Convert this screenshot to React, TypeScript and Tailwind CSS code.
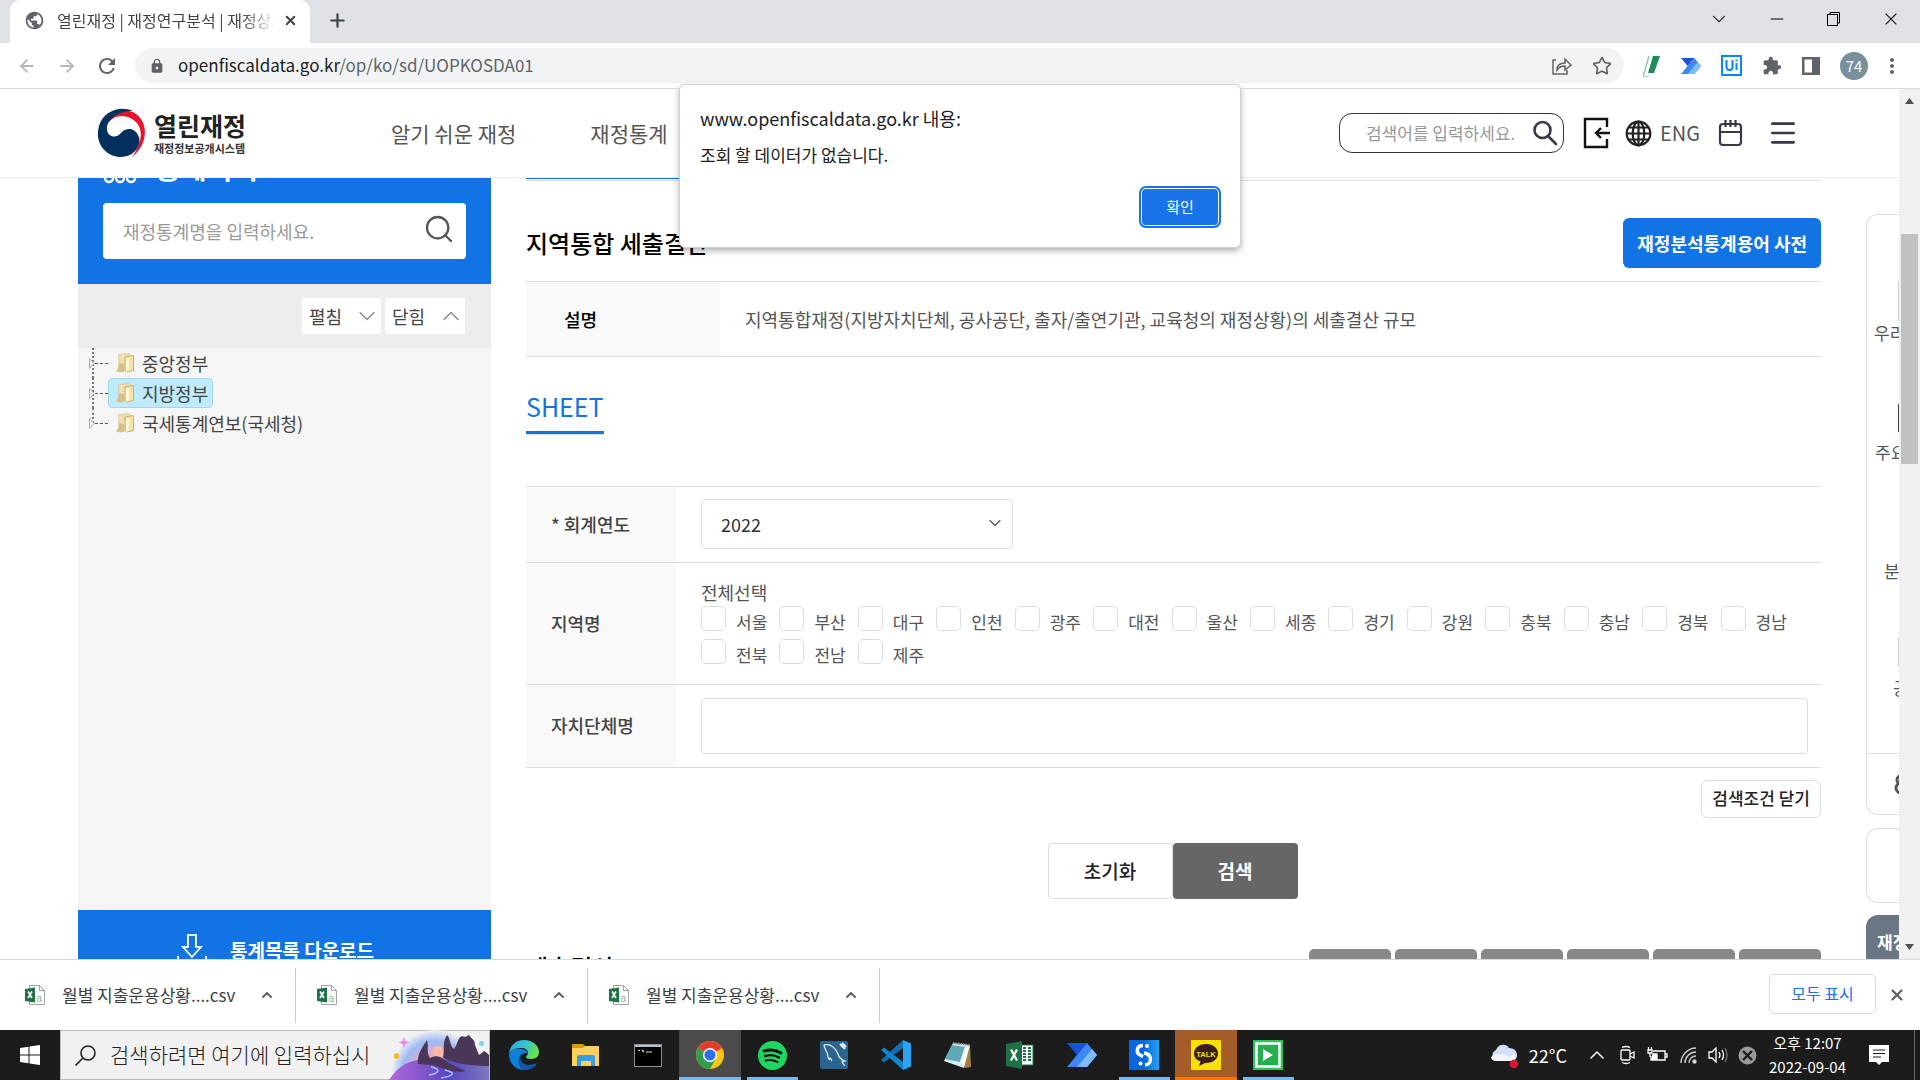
import type { ReactNode } from "react";
import {
  ArrowLeft,
  ArrowRight,
  ChevronDown,
  ChevronUp,
  Minus,
  Plus,
  Search,
  Star,
  X,
  Info,
  Menu,
} from "lucide-react";
import { MdExtension, MdLock, MdRefresh, MdMoreVert, MdPublic } from "react-icons/md";

const regions = [
  "서울", "부산", "대구", "인천", "광주", "대전", "울산", "세종", "경기",
  "강원", "충북", "충남", "경북", "경남", "전북", "전남", "제주",
];

const downloads = [1, 2, 3];

/* ---------- small drawings ---------- */

function ExcelFileIcon() {
  return (
    <svg width="20" height="20" viewBox="0 0 20 20">
      <path d="M4.5.5h10l5 5v14h-15z" fill="#fff" stroke="#a3a3a3" />
      <path d="M14.5.5v5h5" fill="none" stroke="#a3a3a3" />
      <path d="M0 4l10-1.5v15L0 16z" fill="#1e7145" />
      <path d="M3 6.5l4 6.5M7 6.5L3 13" stroke="#fff" strokeWidth="1.6" />
      <text x="11.5" y="16.5" fontSize="10" fontFamily="Liberation Sans" fill="#7fb899">a</text>
    </svg>
  );
}

function FlowIcon({ size }: { size: number }) {
  return (
    <svg width={size} height={size} viewBox="0 0 30 30">
      <path d="M0 3h20L10 15z" fill="#1554d6" />
      <path d="M20 3L0 27h20l10-12z" fill="#3b87f7" />
      <path d="M25 9l5 6-10 12H10z" fill="#7cbcff" />
    </svg>
  );
}

function TaegeukLogo() {
  return (
    <svg width="50" height="50" viewBox="0 0 50 50">
      <path d="M10 11A24 24 0 0 1 36 4C52 12 52 36 35 49c8-11 13-26 4-35C31 6 18 6 12 14z" fill="#e6132e" />
      <path d="M36 3C22-3 6 4 2 18c-5 17 7 31 22 31 14 0 22-13 17-22-4-8-13-7-17-2-5 6-13 4-14-3C9 12 20 3 36 3z" fill="#03305c" />
    </svg>
  );
}

function GlobeIcon() {
  return (
    <svg width="27" height="27" viewBox="0 0 27 27" fill="none" stroke="#222" strokeWidth="2.2">
      <circle cx="13.5" cy="13.5" r="11.8" />
      <ellipse cx="13.5" cy="13.5" rx="5.8" ry="11.8" />
      <path d="M13.5 1.5v24M1.5 13.5h24M3.5 7.5h20M3.5 19.5h20" />
    </svg>
  );
}

function LoginIcon() {
  return (
    <svg width="28" height="32" viewBox="0 0 28 32" fill="none" stroke="#111" strokeWidth="2.4">
      <path d="M24 10V2H2v28h22v-8" />
      <path d="M27 16H13M18 11l-5 5 5 5" />
    </svg>
  );
}

function CalendarIcon() {
  return (
    <svg width="25" height="28" viewBox="0 0 25 28" fill="none" stroke="#3a3846" strokeWidth="2.2">
      <rect x="2" y="5" width="21" height="21" rx="3" />
      <path d="M2 13h21M7.500 1v7M12.500 1v7M17.500 1v7" />
    </svg>
  );
}

function HeaderSearchIcon() {
  return (
    <svg width="26" height="26" viewBox="0 0 26 26" fill="none" stroke="#3a3846" strokeWidth="2.6" strokeLinecap="round">
      <circle cx="10.500" cy="10" r="8" />
      <path d="M16 16l8 8" />
    </svg>
  );
}

function FolderIcon() {
  return (
    <svg width="20" height="20" viewBox="0 0 20 20">
      <path d="M3.500 1.500L14 .5l1 1v4L8 19H4z" fill="#eedfb4" stroke="#d3c08a" strokeWidth=".6" />
      <path d="M4 10c0 4-1 6-3.500 8.500L9 19v-8z" fill="#d6c086" />
      <path d="M10 4l8.500-1.500v15L12 19l-2-1z" fill="#f5e3a8" stroke="#c9a94f" strokeWidth=".9" />
      <path d="M11 5.500l3-.5v13l-3 .5z" fill="#fdf6da" />
    </svg>
  );
}

function SearchArt() {
  return (
    <svg width="100" height="50" viewBox="0 0 100 50" className="shrink-0">
      <defs>
        <radialGradient id="sun" cx=".5" cy=".5" r=".5">
          <stop offset="0" stopColor="#f9a2a0" />
          <stop offset=".4" stopColor="#f0a8bd" />
          <stop offset=".75" stopColor="#9db9f5" />
          <stop offset="1" stopColor="#f1f1f1" />
        </radialGradient>
        <linearGradient id="river" x1="0" x2="1">
          <stop offset="0" stopColor="#b269d8" />
          <stop offset=".6" stopColor="#5a46c0" />
          <stop offset="1" stopColor="#7a78bd" />
        </linearGradient>
      </defs>
      <circle cx="46" cy="44" r="44" fill="url(#sun)" />
      <circle cx="49" cy="22" r="6" fill="#fdb9a5" />
      <path d="M0 50C10 34 24 28 40 30l60-2v22z" fill="url(#river)" />
      <path d="M29 34c-1-10 4-16 9-24 2 6-1 12 3 18 8-4 13 0 18 5l18 8c-14 3-24-4-34-6z" fill="#4a3658" />
      <path d="M54 28c2-9-1-16 4-23 4 4 2 10 7 14 4-5 3-11 8-13 5 2 4 0 7-1 3 5 6 4 6 10l4 10c6-4 4-6 10 0v11c-16 0-34-2-46-8z" fill="#4a3658" />
      <path d="M42 37c10 2 9 6-2 8M56 40c12 3 8 6-4 8" stroke="#a8c4ff" fill="none" strokeWidth="1.500" />
      <path d="M15 7l1.500 4 4 1.500-4 1.500-1.500 4-1.500-4-4-1.500 4-1.500z" fill="#e58af0" />
      <circle cx="7.500" cy="26" r="2.700" fill="#fbb416" />
      <circle cx="92.500" cy="13.500" r="2.500" fill="#78d7ea" />
    </svg>
  );
}

/* ---------- taskbar application icons ---------- */

function EdgeIcon() {
  return (
    <svg width="30" height="30" viewBox="0 0 30 30">
      <defs>
        <linearGradient id="edgeTop" x1="0" x2="1" y1="0" y2=".4">
          <stop offset="0" stopColor="#2aa4e6" />
          <stop offset=".6" stopColor="#35c6c9" />
          <stop offset="1" stopColor="#66e24e" />
        </linearGradient>
      </defs>
      <path d="M0 14C1 5 7 0 15 0c9 0 15 6 15 12 0 5-4 7-8 7-3 0-5-1-5-2 0-1 2-2 2-4C19 9 15 8 12 8 6 8 1 11 0 14z" fill="url(#edgeTop)" />
      <path d="M0 14c2-4 7-6 11-5 4 0 8 2 8 5-1-2-6-1-8 2-3 5 0 12 7 13C8 32 0 24 0 14z" fill="#0d7fd8" />
      <path d="M12 15c-2 4 1 9 7 10 3 0 6-1 9-2-2 5-7 7-12 7-6-1-9-9-4-15z" fill="#1557a5" />
    </svg>
  );
}

function ExplorerIcon() {
  return (
    <svg width="28" height="24" viewBox="0 0 28 24">
      <path d="M0 1h11l3 3v5H0z" fill="#dc9a04" />
      <path d="M0 5h11l2-2h14v20H0z" fill="#fcd15c" />
      <path d="M5 23V14q0-2 2-2h14q2 0 2 2v9h-4v-5H9v5z" fill="#3e9be0" />
    </svg>
  );
}

function TerminalIcon() {
  return (
    <svg width="28" height="23" viewBox="0 0 28 23">
      <rect x=".5" y=".5" width="27" height="22" fill="#000" stroke="#8b919b" />
      <path d="M1 1h26v2H1z" fill="#b9bec6" />
      <path d="M4 6.500h2M8 6l2 2M12 8h6" stroke="#ddd" strokeWidth="1.200" />
    </svg>
  );
}

function ChromeIcon() {
  return (
    <svg width="28" height="28" viewBox="0 0 28 28">
      <circle cx="14" cy="14" r="14" fill="#fbc417" />
      <path d="M14 14L1.900 7A14 14 0 0 1 26.100 7z" fill="#e33b2e" />
      <path d="M14 14L1.900 7A14 14 0 0 0 14 28l6-10.500z" fill="#2f9e4f" />
      <circle cx="14" cy="14" r="7" fill="#fff" />
      <circle cx="14" cy="14" r="5.600" fill="#2f6fe8" />
    </svg>
  );
}

function SpotifyIcon() {
  return (
    <svg width="29" height="29" viewBox="0 0 29 29" fill="none" stroke="#111" strokeLinecap="round">
      <circle cx="14.500" cy="14.500" r="14.500" fill="#1ed760" stroke="none" />
      <path d="M6 10c6-2 12-1 17 2" strokeWidth="3" />
      <path d="M7 15c5-1.500 10-1 14 1.500" strokeWidth="2.400" />
      <path d="M7.500 19.500c4-1 8-.5 12 1.500" strokeWidth="2" />
    </svg>
  );
}

function DolphinIcon() {
  return (
    <svg width="28" height="28" viewBox="0 0 28 28" fill="none" stroke="#e4f0f7">
      <rect width="28" height="28" rx="2" fill="#2c6490" stroke="none" />
      <path d="M4 4c7-2 12 4 14 9 1 4 4 6 7 7l-3 1 3 4M4 4c0 4 4 7 4 12 1 2 1 4 2 1 2 1 1 2 2 3" strokeWidth="1.200" />
      <path d="M20 3l5 5M22 2l4 4" strokeWidth="2" />
    </svg>
  );
}

function CodeIcon() {
  return (
    <svg width="30" height="30" viewBox="0 0 30 30">
      <path d="M0 20l3 2.500L22 8V0z" fill="#0f6fb3" />
      <path d="M0 10l3-2.500L22 22v8z" fill="#1285ce" />
      <path d="M22 0l8 3.500v23L22 30z" fill="#2aa5f3" />
    </svg>
  );
}

function NotepadIcon() {
  return (
    <svg width="28" height="28" viewBox="0 0 28 28">
      <path d="M10 3l16 1 1 22-6 1z" fill="#a87d3d" />
      <path d="M9 2l17 2-6 23L0 20z" fill="#d6eef0" />
      <path d="M8 4l13 2-5 15L1 18z" fill="#5ea9b5" />
      <path d="M21 6l4 0-5 19-4-4z" fill="#f4fafa" />
      <path d="M9 2l17 2" stroke="#888" strokeWidth="2" strokeDasharray="1.500 1" />
    </svg>
  );
}

function ExcelIcon() {
  return (
    <svg width="28" height="28" viewBox="0 0 28 28">
      <rect x="14" y="4" width="13" height="20" fill="#fff" stroke="#1e7145" />
      <path d="M17 7h3M17 10h3M17 13h3M17 16h3M17 19h3M22 7h3M22 10h3M22 13h3M22 16h3M22 19h3" stroke="#1e7145" strokeWidth="2" />
      <path d="M0 3l16-3v28L0 25z" fill="#1e7145" />
      <path d="M5 8.500l6 11M11 8.500l-6 11" stroke="#fff" strokeWidth="2.200" />
    </svg>
  );
}

function SquareSIcon() {
  return (
    <svg width="30" height="30" viewBox="0 0 30 30" fill="none" stroke="#fff" strokeWidth="3.400">
      <defs>
        <linearGradient id="sq" x1="0" x2="1">
          <stop offset=".5" stopColor="#0a66e0" />
          <stop offset="1" stopColor="#22a3f0" />
        </linearGradient>
      </defs>
      <rect width="30" height="30" fill="url(#sq)" stroke="none" />
      <path d="M14 5.500c-7 0-7 7.500-3 9.500l3 1.500" />
      <path d="M15 13c8 1 9 11 1 12" />
      <circle cx="18" cy="6" r="2" fill="#fff" stroke="none" />
      <circle cx="11.500" cy="23.500" r="2" fill="#fff" stroke="none" />
    </svg>
  );
}

function TalkIcon() {
  return (
    <svg width="30" height="30" viewBox="0 0 30 30">
      <rect width="30" height="30" rx="1" fill="#f9e000" />
      <path d="M15 4c7 0 12 4 12 9.500S22 23 15 23h-1l-6 3 1.500-4.500C5 20 3 17 3 13.500 3 8 8 4 15 4z" fill="#3b1e1e" />
      <text x="15" y="16.500" fontSize="7.500" fontWeight="700" textAnchor="middle" fontFamily="Liberation Sans" fill="#f9e000">TALK</text>
    </svg>
  );
}

function PlayerIcon() {
  return (
    <svg width="30" height="30" viewBox="0 0 30 30">
      <rect width="30" height="30" fill="#2bc45a" />
      <rect x="3.500" y="3.500" width="23" height="23" fill="#25b04f" stroke="#fff" strokeWidth="2.500" />
      <path d="M10 9l10 6-10 6z" fill="#fff" />
    </svg>
  );
}

const apps: { name: string; icon: ReactNode; box: string; line: string }[] = [
  { name: "Edge", icon: <EdgeIcon />, box: "", line: "" },
  { name: "Explorer", icon: <ExplorerIcon />, box: "", line: "" },
  { name: "Terminal", icon: <TerminalIcon />, box: "", line: "" },
  { name: "Chrome", icon: <ChromeIcon />, box: "bg-[#4b4b4b]", line: "w-full bg-[#76b9ed]" },
  { name: "Spotify", icon: <SpotifyIcon />, box: "", line: "w-[51px] bg-[#76b9ed]" },
  { name: "Workbench", icon: <DolphinIcon />, box: "", line: "" },
  { name: "Code", icon: <CodeIcon />, box: "", line: "" },
  { name: "Notepad", icon: <NotepadIcon />, box: "", line: "" },
  { name: "Excel", icon: <ExcelIcon />, box: "", line: "" },
  { name: "Flow", icon: <FlowIcon size={30} />, box: "", line: "" },
  { name: "S", icon: <SquareSIcon />, box: "", line: "w-[51px] bg-[#76b9ed]" },
  { name: "Talk", icon: <TalkIcon />, box: "bg-[#a55d27]", line: "w-full bg-[#ff7300]" },
  { name: "Player", icon: <PlayerIcon />, box: "", line: "w-[51px] bg-[#76b9ed]" },
];

/* ---------- browser chrome ---------- */

function TabStrip() {
  return (
    <div className="flex h-[43px] shrink-0 items-stretch bg-[#dee1e6] pl-[10px]">
      <div className="flex w-[300px] items-center rounded-t-[10px] bg-white pb-[2px] pl-[14px] pr-3">
        <MdPublic className="size-[21px] shrink-0 text-[#5f6368]" />
        <span className="ml-3 w-[218px] overflow-hidden whitespace-nowrap bg-gradient-to-r from-[#3c4043] from-85% to-white bg-clip-text pb-[2px] text-base leading-6 text-transparent">
          열린재정 | 재정연구분석 | 재정상세
        </span>
        <button aria-label="탭 닫기" className="ml-2 shrink-0">
          <X className="size-[15px] text-[#3c4043]" strokeWidth={3} />
        </button>
      </div>
      <button aria-label="새 탭" className="ml-[17px] pb-[2px]">
        <Plus className="size-[21px] text-[#3c4043]" strokeWidth={2.5} />
      </button>
      <div className="ml-auto flex items-center gap-[37px] pb-[6px] pr-[19px]">
        <button aria-label="탭 검색"><ChevronDown className="size-[22px] text-[#333]" strokeWidth={1.2} /></button>
        <button aria-label="최소화"><Minus className="size-[20px] text-black" strokeWidth={1.3} /></button>
        <button aria-label="이전 크기로">
          <svg width="20" height="14" viewBox="0 0 20 14" fill="none" stroke="#000">
            <rect x="3.500" y="2.500" width="10" height="11" />
            <path d="M6 2V.5h9.500V11H14" />
          </svg>
        </button>
        <button aria-label="닫기"><X className="size-[20px] text-[#222]" strokeWidth={1.300} /></button>
      </div>
    </div>
  );
}

function Toolbar() {
  return (
    <div className="flex h-[46px] shrink-0 items-center border-b border-[#d8d9dc] bg-white pl-[17px] pr-4">
      <button aria-label="뒤로"><ArrowLeft className="size-5 text-[#b5b7ba]" strokeWidth={2.200} /></button>
      <button aria-label="앞으로" className="ml-5"><ArrowRight className="size-5 text-[#b5b7ba]" strokeWidth={2.200} /></button>
      <button aria-label="새로고침" className="ml-[18px]"><MdRefresh className="size-6 text-[#5f6368]" /></button>
      <div className="ml-4 flex h-[35px] flex-1 items-center rounded-full bg-[#f1f3f4] pl-[14px] pr-3">
        <MdLock className="size-4 text-[#5f6368]" />
        <p className="ml-[13px] flex-1 pb-[2px] text-[17px] leading-6 text-[#5f6368]">
          <span className="text-[#202124]">openfiscaldata.go.kr</span>/op/ko/sd/UOPKOSDA01
        </p>
        <button aria-label="공유">
          <svg width="20" height="18" viewBox="0 0 20 18" fill="none" stroke="#5f6368" strokeWidth="1.500">
            <path d="M4 3H1v14h14v-4" />
            <path d="M5 13c0-5 3-7 8-7V2l6 6-6 5V9c-4 0-6 1-8 4z" />
          </svg>
        </button>
        <button aria-label="북마크" className="ml-5"><Star className="size-5 text-[#5f6368]" /></button>
      </div>
      <div className="ml-[19px] flex items-center gap-5">
        <svg width="18" height="22" viewBox="0 0 18 22">
          <path d="M6 1L0 22h6" fill="none" stroke="#8ec9ab" strokeWidth="1.500" />
          <path d="M10 1h7l-6 17H5z" fill="#1f8a5b" />
        </svg>
        <FlowIcon size={20} />
        <svg width="21" height="21" viewBox="0 0 21 21" fill="none" stroke="#0a84ff" strokeWidth="2">
          <rect x="1" y="1" width="19" height="19" fill="#fff" />
          <path d="M5.500 5v7q0 3 3 3t3-3V5M15.500 8v7M15.500 4.500v2" />
        </svg>
        <MdExtension className="size-5 text-[#5f6368]" />
        <svg width="18" height="18" viewBox="0 0 18 18">
          <rect x="1.250" y="1.250" width="15.500" height="15.500" fill="#fff" stroke="#5f6368" strokeWidth="2.500" />
          <rect x="10" y="1" width="7" height="16" fill="#5f6368" />
        </svg>
        <span className="flex size-7 items-center justify-center rounded-full bg-[#78909c] text-[15px] leading-5 text-white">74</span>
      </div>
      <button aria-label="메뉴" className="ml-3"><MdMoreVert className="size-6 text-[#5f6368]" /></button>
    </div>
  );
}

function AlertDialog() {
  return (
    <div
      role="alertdialog"
      aria-labelledby="alert-title"
      className="absolute left-1/2 top-[84px] z-20 flex w-[562px] -translate-x-1/2 flex-col rounded-md border border-[#cfd2d1] bg-white px-5 pb-5 pt-5 shadow-[0_3px_6px_rgba(0,0,0,0.3)]"
    >
      <h2 id="alert-title" className="text-[18px] leading-[26px] text-[#202124]">www.openfiscaldata.go.kr 내용:</h2>
      <p className="mt-3 text-[17px] leading-6 text-[#202124]">조회 할 데이터가 없습니다.</p>
      <button className="mt-5 h-[40px] w-[80px] self-end rounded-md border border-white bg-[#1a73e8] text-[15px] leading-5 text-white outline-2 -outline-offset-1 outline-[#1a73e8] ring-1 ring-inset ring-white">
        확인
      </button>
    </div>
  );
}

/* ---------- web page ---------- */

function SiteHeader() {
  return (
    <header className="z-10 flex h-[89px] shrink-0 items-center border-b border-[#eee] bg-white pl-[97px] pr-[100px]">
      <a href="#home" className="flex w-[155px] items-center gap-[7px]">
        <TaegeukLogo />
        <span className="flex flex-col font-bold text-[#222]">
          <span className="text-[25px] leading-[30px]">열린재정</span>
          <span className="whitespace-nowrap text-[11px] leading-4 text-[#333]">재정정보공개시스템</span>
        </span>
      </a>
      <nav className="ml-[139px] flex gap-[74px] text-[21px] leading-8 text-[#555]">
        <a href="#easy">알기 쉬운 재정</a>
        <a href="#stats">재정통계</a>
      </nav>
      <div className="ml-auto flex items-center">
        <div className="flex h-10 w-[225px] items-center rounded-[13px] border border-[#333] pl-[26px] pr-[5px]">
          <input aria-label="검색어" placeholder="검색어를 입력하세요." className="w-full min-w-0 flex-1 text-[17px] leading-6 outline-none placeholder:text-[#999]" />
          <button aria-label="검색"><HeaderSearchIcon /></button>
        </div>
        <a href="#login" aria-label="로그인" className="ml-[19px]"><LoginIcon /></a>
        <a href="#eng" className="ml-[14px] flex items-center gap-2 text-[20px] leading-7 text-[#555]">
          <GlobeIcon />
          ENG
        </a>
        <a href="#calendar" aria-label="일정" className="ml-[18px]"><CalendarIcon /></a>
        <button aria-label="전체 메뉴" className="ml-6"><Menu className="size-8 text-[#3a3846]" strokeWidth={2} /></button>
      </div>
    </header>
  );
}

function TreeRow({ label, active, last }: { label: string; active?: boolean; last?: boolean }) {
  return (
    <li className="flex h-[30px] items-center">
      <span className="relative flex h-full w-4 items-center">
        <span className={`absolute left-0 top-0 border-l-2 border-dotted border-[#777] ${last ? "h-1/2" : "h-full"}`} />
        <svg width="6" height="11" viewBox="0 0 6 11" className="absolute -left-[3px]">
          <path d="M.5.500l4.500 5-4.500 5z" fill="#f5f5f5" stroke="#aaa" />
        </svg>
        <span className="ml-[3px] w-[13px] border-t border-dashed border-[#555]" />
      </span>
      <a
        href={`#${label}`}
        className={`flex h-[30px] items-center gap-[7px] rounded-sm border pl-[6px] pr-1 ${active ? "border-[#a5d5ec] bg-[#beebff]" : "border-transparent"}`}
      >
        <FolderIcon />
        <span className="text-[18px] leading-6 text-[#444]">{label}</span>
      </a>
    </li>
  );
}

function Sidebar() {
  return (
    <aside className="flex w-[413px] shrink-0 flex-col bg-[#f5f5f5]">
      <div className="-mt-[30px] bg-[#1274e4] px-[25px] pb-[25px]">
        <div className="flex h-[55px] items-start justify-between text-white">
          <div className="flex items-center gap-[18px]">
            <svg width="34" height="38" viewBox="0 0 34 38" fill="none" stroke="#fff" strokeWidth="2.500">
              <circle cx="6" cy="30" r="4" />
              <circle cx="17" cy="30" r="4" />
              <circle cx="28" cy="30" r="4" />
            </svg>
            <h2 className="text-[28px] font-bold leading-9">통계처리</h2>
          </div>
          <a href="#notice" className="flex items-center gap-2 pt-1 text-[18px] leading-[32px]">
            알림 <Info className="size-5" strokeWidth={1.500} />
          </a>
        </div>
        <div className="flex h-14 items-center rounded bg-white pl-5 pr-[11px]">
          <input aria-label="재정통계명" placeholder="재정통계명을 입력하세요." className="min-w-0 flex-1 text-[18px] leading-6 outline-none placeholder:text-[#999]" />
          <button aria-label="찾기" className="pb-1"><Search className="size-8 text-[#555]" strokeWidth={1.700} /></button>
        </div>
      </div>
      <div className="flex h-16 items-center justify-end gap-1 bg-[#ededed] pr-[26px] text-[18px] leading-6 text-[#444]">
        <button className="flex h-9 w-[79px] items-center justify-between bg-white pl-[7px]">
          펼침 <ChevronDown className="size-7 text-[#888]" strokeWidth={1.200} />
        </button>
        <button className="flex h-9 w-20 items-center justify-between bg-white pl-[7px]">
          닫힘 <ChevronUp className="size-7 text-[#888]" strokeWidth={1.200} />
        </button>
      </div>
      <ul className="flex-1 pl-[14px]">
        <TreeRow label="중앙정부" />
        <TreeRow label="지방정부" active />
        <TreeRow label="국세통계연보(국세청)" last />
      </ul>
      <button className="flex h-[49px] items-start justify-center gap-[23px] overflow-hidden bg-[#1274e4] pr-[18px] pt-6 text-[19px] font-bold leading-8 text-white">
        <svg width="30" height="30" viewBox="0 0 30 30" fill="none" stroke="#fff" strokeWidth="1.800" className="shrink-0">
          <path d="M11 1h8v12h5l-9 10-9-10h5z" />
          <path d="M1 22v7h28v-7" />
        </svg>
        통계목록 다운로드
      </button>
    </aside>
  );
}

function RegionPicker() {
  return (
    <div role="group" aria-label="지역명">
      <button className="block text-[18px] leading-6 text-[#555]">전체선택</button>
      <div className="mt-[2px] grid grid-cols-[repeat(14,1fr)] gap-y-[5px] pr-[22px]">
        {regions.map((name) => (
          <label key={name} className="flex h-7 items-start gap-[10px] whitespace-nowrap text-[17px] leading-6 text-[#555]">
            <input type="checkbox" className="size-[25px] shrink-0 appearance-none rounded-[5px] border border-[#ddd] bg-white" />
            <span className="pt-1">{name}</span>
          </label>
        ))}
      </div>
    </div>
  );
}

function Main() {
  const head = "w-[150px] bg-[#f9f9f9] pb-[2px] pl-[25px] text-left text-[18px] font-medium leading-6 text-[#444]";
  return (
    <main className="ml-[35px] flex min-w-0 flex-1 flex-col">
      <div className="h-[3px] border-b border-[#ddd]">
        <div className="h-px w-[300px] bg-[#1274e4]" />
      </div>
      <div className="mt-[37px] flex items-center justify-between">
        <h1 className="text-[24px] font-medium leading-9 text-black">지역통합 세출결산</h1>
        <button className="h-[50px] rounded-md bg-[#1274e4] px-[14px] text-[18px] font-bold leading-6 text-white">
          재정분석통계용어 사전
        </button>
      </div>
      <table className="mt-[13px] w-full border-y border-[#ddd]">
        <tbody>
          <tr className="h-[75px]">
            <th className="w-[194px] bg-[#f9f9f9] pl-[38px] text-left text-[18px] font-medium leading-6 text-black">설명</th>
            <td className="pl-[25px] text-[18px] leading-6 text-[#555]">
              지역통합재정(지방자치단체, 공사공단, 출자/출연기관, 교육청의 재정상황)의 세출결산 규모
            </td>
          </tr>
        </tbody>
      </table>
      <div className="mt-[30px] flex">
        <button className="border-b-[3px] border-[#1274e4] pb-[6px] text-[25px] leading-[38px] text-[#1274e4] shadow-[0_2px_0_-1px_#ddd]">
          SHEET
        </button>
      </div>
      <table className="mt-[52px] w-full border-collapse border-t border-[#ddd]">
        <tbody>
          <tr className="h-[76px] border-b border-[#ddd]">
            <th className={head}><label htmlFor="year">* 회계연도</label></th>
            <td className="pb-[2px] pl-[25px]">
              <div className="relative w-[312px]">
                <select id="year" className="h-[50px] w-full appearance-none rounded-[5px] border border-[#ddd] bg-white pl-[19px] text-[18px] leading-6 text-[#333]">
                  <option>2022</option>
                </select>
                <ChevronDown className="pointer-events-none absolute right-2 top-[14px] size-5 text-[#555]" strokeWidth={1.400} />
              </div>
            </td>
          </tr>
          <tr className="h-[122px] border-b border-[#ddd]">
            <th className={head}>지역명</th>
            <td className="pl-[25px]"><RegionPicker /></td>
          </tr>
          <tr className="h-[83px] border-b border-[#ddd]">
            <th className={head}><label htmlFor="local">자치단체명</label></th>
            <td className="pl-[25px] pr-[13px]">
              <input id="local" className="block h-14 w-full rounded border border-[#ddd] px-4 text-[18px]" />
            </td>
          </tr>
        </tbody>
      </table>
      <button className="mt-3 h-[38px] self-end rounded-md border border-[#ddd] px-[10px] pb-[2px] text-[17px] font-medium leading-6 text-[#222]">
        검색조건 닫기
      </button>
      <div className="mt-[25px] flex justify-center pr-[2px]">
        <button className="h-14 w-[125px] rounded border border-[#ddd] text-[19px] font-medium leading-6 text-[#222]">초기화</button>
        <button className="h-14 w-[125px] rounded bg-[#666] text-[19px] font-bold leading-6 text-white">검색</button>
      </div>
      <div className="mt-[50px] flex items-start">
        <h2 className="h-[10px] overflow-hidden pt-1 text-[24px] font-medium leading-[28px] text-black">세출결산</h2>
        <div className="ml-auto flex gap-1">
          {["엑셀", "CSV", "JSON", "XML", "인쇄", "공유"].map((name) => (
            <button key={name} aria-label={name} className="h-[10px] w-[82px] rounded-t-[5px] bg-[#888]" />
          ))}
        </div>
      </div>
    </main>
  );
}

function QuickMenu() {
  return (
    <aside className="ml-[45px] mt-9 flex w-[33px] shrink-0 flex-col overflow-hidden whitespace-nowrap text-[17px] leading-6 text-[#555]">
      <div className="h-[601px] shrink-0 rounded-l-xl border-y border-l border-[#ddd]">
        <ul className="flex h-[539px] flex-col border-b border-[#ddd] pt-[66px]">
          <li className="flex h-[119px] flex-col pl-[7px]">
            <span className="ml-[24px] h-10 border-l border-[#ccc]" />
            <a href="#a">우리</a>
          </li>
          <li className="flex h-[119px] flex-col pl-2">
            <span className="mb-2 ml-[23px] mt-1 h-7 border-l-2 border-[#444]" />
            <a href="#b">주요</a>
          </li>
          <li className="flex h-[119px] flex-col pl-[17px] pt-10">
            <a href="#c">분석</a>
          </li>
          <li className="flex h-[100px] flex-col pl-[26px]">
            <span className="mb-[10px] ml-[5px] h-7 border-l border-[#ccc]" />
            <a href="#d">공개</a>
          </li>
        </ul>
        <svg width="32" height="60" viewBox="0 0 32 60" fill="none" stroke="#555" strokeWidth="3" className="block">
          <circle cx="34" cy="26" r="4" />
          <circle cx="34" cy="34" r="5" />
        </svg>
      </div>
      <div className="mt-[13px] h-[75px] shrink-0 rounded-l-xl border-y border-l border-[#ddd]" />
      <div className="mt-3 h-11 shrink-0 rounded-tl-xl bg-[#6b7684] pl-[11px] pt-[15px] text-[17px] font-bold text-white">재정</div>
    </aside>
  );
}

function PageScrollbar() {
  return (
    <div className="flex w-[21px] shrink-0 flex-col items-center justify-between bg-[#f1f1f1] pb-[9px] pt-[9px]">
      <svg width="9" height="6" viewBox="0 0 9 6"><path d="M0 6L4.500 0 9 6z" fill="#505050" /></svg>
      <div className="mb-auto mt-[130px] h-[230px] w-[17px] bg-[#c1c1c1]" />
      <svg width="9" height="6" viewBox="0 0 9 6"><path d="M0 0h9L4.500 6z" fill="#505050" /></svg>
    </div>
  );
}

/* ---------- bottom bars ---------- */

function DownloadBar() {
  return (
    <div className="flex h-[71px] shrink-0 items-center border-t border-[#d8d9dc] bg-white pl-1 pr-[14px]">
      {downloads.map((id) => (
        <div key={id} className="flex h-[55px] w-[292px] items-center border-r border-[#ccc] pl-[21px] pr-[20px]">
          <ExcelFileIcon />
          <span className="ml-[17px] whitespace-nowrap text-[17px] leading-6 text-[#3c4043]">월별 지출운용상황....csv</span>
          <button aria-label="다운로드 메뉴" className="ml-auto"><ChevronUp className="size-[16px] text-[#5f6368]" strokeWidth={3} /></button>
        </div>
      ))}
      <button className="mb-[2px] ml-auto h-10 w-[107px] rounded-[5px] border border-[#dadce0] pb-[3px] text-[16px] leading-5 text-[#1a73e8]">모두 표시</button>
      <button aria-label="닫기" className="ml-3"><X className="size-[18px] text-[#5f6368]" strokeWidth={3} /></button>
    </div>
  );
}

function Taskbar() {
  return (
    <div className="flex h-[50px] shrink-0 items-stretch bg-[#1c1c1c] text-white">
      <button aria-label="시작" className="flex w-[60px] items-center justify-center">
        <svg width="20" height="20" viewBox="0 0 20 20" fill="#fff">
          <path d="M0 3l8.500-1.200v7.700H0zM9.500 1.600L20 0v9.500H9.500zM0 10.500h8.500v7.700L0 17zM9.500 10.500H20V20L9.500 18.400z" />
        </svg>
      </button>
      <div className="flex w-[430px] items-center border border-[#bbb] bg-[#f1f1f1] pl-[14px]">
        <svg width="21" height="21" viewBox="0 0 21 21" fill="none" stroke="#222" strokeWidth="1.600" className="shrink-0">
          <circle cx="13" cy="8" r="7" />
          <path d="M8 13l-7.500 7.500" />
        </svg>
        <input aria-label="Windows 검색" placeholder="검색하려면 여기에 입력하십시" className="ml-[14px] min-w-0 flex-1 pb-[3px] text-[21px] font-light leading-7 outline-none placeholder:text-[#222]" />
        <SearchArt />
      </div>
      <div className="ml-[3px] flex">
        {apps.map((app) => (
          <button key={app.name} aria-label={app.name} className={`relative flex w-[62px] items-center justify-center ${app.box}`}>
            {app.icon}
            <span className={`absolute bottom-0 h-[3px] ${app.line}`} />
          </button>
        ))}
      </div>
      <div className="ml-auto flex items-center">
        <svg width="30" height="28" viewBox="0 0 30 28">
          <path d="M7 20a6 6 0 0 1 0-11C9 3 17 2 20 7c5 0 8 3 8 7s-3 6-6 6z" fill="#cfe0f8" />
          <path d="M2 16c4-4 14-4 18 0l6-3c2 4 0 7-4 7H7c-3 0-5-2-5-4z" fill="#f3f7fd" />
          <circle cx="25" cy="23" r="4.300" fill="#e0142f" />
        </svg>
        <span className="ml-[10px] text-[18px] leading-6">22°C</span>
        <button aria-label="숨겨진 아이콘" className="ml-[18px]"><ChevronUp className="size-6" strokeWidth={1.500} /></button>
        <svg width="16" height="20" viewBox="0 0 16 20" fill="none" stroke="#fff" strokeWidth="1.300" className="ml-[11px]">
          <rect x="1" y="5" width="9" height="10" rx="1" />
          <path d="M10 9l4-2v6l-4-2M2 2.500q4-2 8 0M2 17.500q4 2 8 0" />
        </svg>
        <svg width="21" height="16" viewBox="0 0 21 16" fill="none" stroke="#fff" strokeWidth="1.300" className="ml-[11px]">
          <path d="M6 4h12v9H4v-4M18 7h2v3h-2M1 3h4v3H1zM1.500 3V0M4.500 3V0M3 6v4" />
          <path d="M6 7h4v5H5z" fill="#fff" />
        </svg>
        <svg width="17" height="17" viewBox="0 0 17 17" fill="none" stroke="#ccc" strokeWidth="1.400" className="ml-3">
          <path d="M1 16C1 8 8 1 16 1M5 16c0-6 5-11 11-11M9 16c0-4 3-7 7-7" />
          <circle cx="14.500" cy="14.500" r="1.500" fill="#fff" />
        </svg>
        <svg width="21" height="18" viewBox="0 0 21 18" fill="none" stroke="#fff" strokeWidth="1.300" className="ml-[11px]">
          <path d="M1 6h3l4-4v14l-4-4H1zM11 6q2 3 0 6M14 4q3 5 0 10" />
          <path d="M17 2q4 7 0 14" stroke="#777" />
        </svg>
        <svg width="19" height="19" viewBox="0 0 19 19" className="ml-[9px]">
          <circle cx="9.500" cy="9.500" r="9" fill="#999" />
          <path d="M5 5l9 9M14 5l-9 9" stroke="#1c1c1c" strokeWidth="2.400" />
        </svg>
        <div className="ml-3 text-center text-[15px] leading-6">
          <p>오후 12:07</p>
          <p>2022-09-04</p>
        </div>
        <button aria-label="알림" className="ml-[23px]">
          <svg width="20" height="20" viewBox="0 0 20 20">
            <path d="M0 0h20v17h-7l-3 3-3-3H0z" fill="#fff" />
            <path d="M4 5h12M4 8.500h12M4 12h8" stroke="#1c1c1c" strokeWidth="1.200" />
          </svg>
        </button>
        <span className="ml-[25px] mr-[5px] h-[50px] border-l border-[#666]" />
      </div>
    </div>
  );
}

export default function App() {
  return (
    <div className="relative flex h-screen flex-col overflow-hidden bg-white font-['Noto_Sans_CJK_KR',sans-serif]">
      <TabStrip />
      <Toolbar />
      <div className="flex min-h-0 flex-1">
        <div className="flex min-w-0 flex-1 flex-col overflow-hidden">
          <SiteHeader />
          <div className="flex min-h-0 flex-1 overflow-hidden pl-[78px]">
            <Sidebar />
            <Main />
            <QuickMenu />
          </div>
        </div>
        <PageScrollbar />
      </div>
      <DownloadBar />
      <Taskbar />
      <AlertDialog />
    </div>
  );
}
